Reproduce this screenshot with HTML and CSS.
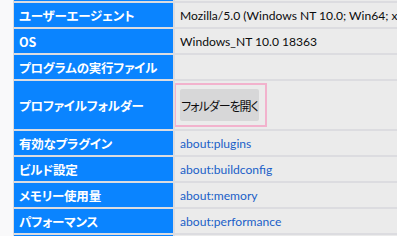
FILE: index.html
```
<!DOCTYPE html>
<html lang="ja">
<head>
<meta charset="utf-8">
<link rel="stylesheet" href="styles.css">
</head>
<body>
<div class="page">
<table class="info">
<colgroup><col class="col-head"><col class="col-val"></colgroup>
<tbody>
<tr><th>バージョン</th><td>78.0</td></tr>
<tr><th>ユーザーエージェント</th><td>Mozilla/5.0 (Windows NT 10.0; Win64; x64; rv:78.0) Gecko/20100101 Firefox/78.0</td></tr>
<tr><th>OS</th><td>Windows_NT 10.0 18363</td></tr>
<tr><th>プログラムの実行ファイル</th><td></td></tr>
<tr class="tall"><th>プロファイルフォルダー</th><td class="btn-cell"><span class="highlight"><button class="btn">フォルダーを開く</button></span></td></tr>
<tr><th>有効なプラグイン</th><td><a class="link" href="#">about:plugins</a></td></tr>
<tr><th>ビルド設定</th><td><a class="link" href="#">about:buildconfig</a></td></tr>
<tr><th>メモリー使用量</th><td><a class="link" href="#">about:memory</a></td></tr>
<tr><th>パフォーマンス</th><td><a class="link" href="#">about:performance</a></td></tr>
<tr><th>登録された Service Worker</th><td><a class="link" href="#">about:serviceworkers</a></td></tr>
</tbody>
</table>
</div>
</body>
</html>
```
FILE: styles.css
```
html, body {
  margin: 0;
  padding: 0;
  overflow: hidden;
  background: #f9f9fa;
}
.page {
  padding-left: 13px;
  margin-top: -24px;
  width: 900px;
  font-family: Lato, "Noto Sans CJK JP", sans-serif;
  font-size: 12.1px;
  color: #0c0c0d;
}
.info {
  border-collapse: separate;
  border-spacing: 0;
  table-layout: fixed;
  width: 861px;
}
.col-head { width: 161px; }
.col-val { width: 700px; }
.info th, .info td {
  border: 1px solid #dcdce0;
  height: 26px;
  padding: 0 5px;
  box-sizing: border-box;
  vertical-align: middle;
}
.info th {
  background: #0a84ff;
  color: #fff;
  text-align: left;
  font-family: "Noto Sans CJK JP", sans-serif;
  font-feature-settings: "palt";
  font-weight: 700;
  font-size: 12.5px;
  white-space: nowrap;
  overflow: hidden;
  letter-spacing: -0.2px;
}
.info td {
  background: #ebebeb;
  white-space: nowrap;
  overflow: hidden;
  padding-left: 5px;
}
.tall th, .tall td { height: 50px; }
.info td.btn-cell {
  padding: 0;
}
.highlight {
  display: inline-block;
  vertical-align: middle;
  border: 2px solid #f2b2cd;
  padding: 4px 6px 4px 4px;
  margin-left: -1px;
}
.btn {
  display: block;
  width: 79px;
  height: 32px;
  padding: 0;
  border: none;
  border-radius: 2px;
  background: #d7d7d8;
  color: #0c0c0d;
  font-family: "Noto Sans CJK JP", sans-serif;
  font-feature-settings: "palt";
  font-size: 12px;
  letter-spacing: -1px;
  text-align: center;
  white-space: nowrap;
}
.link {
  color: #1a5fc8;
  text-decoration: none;
}
```
